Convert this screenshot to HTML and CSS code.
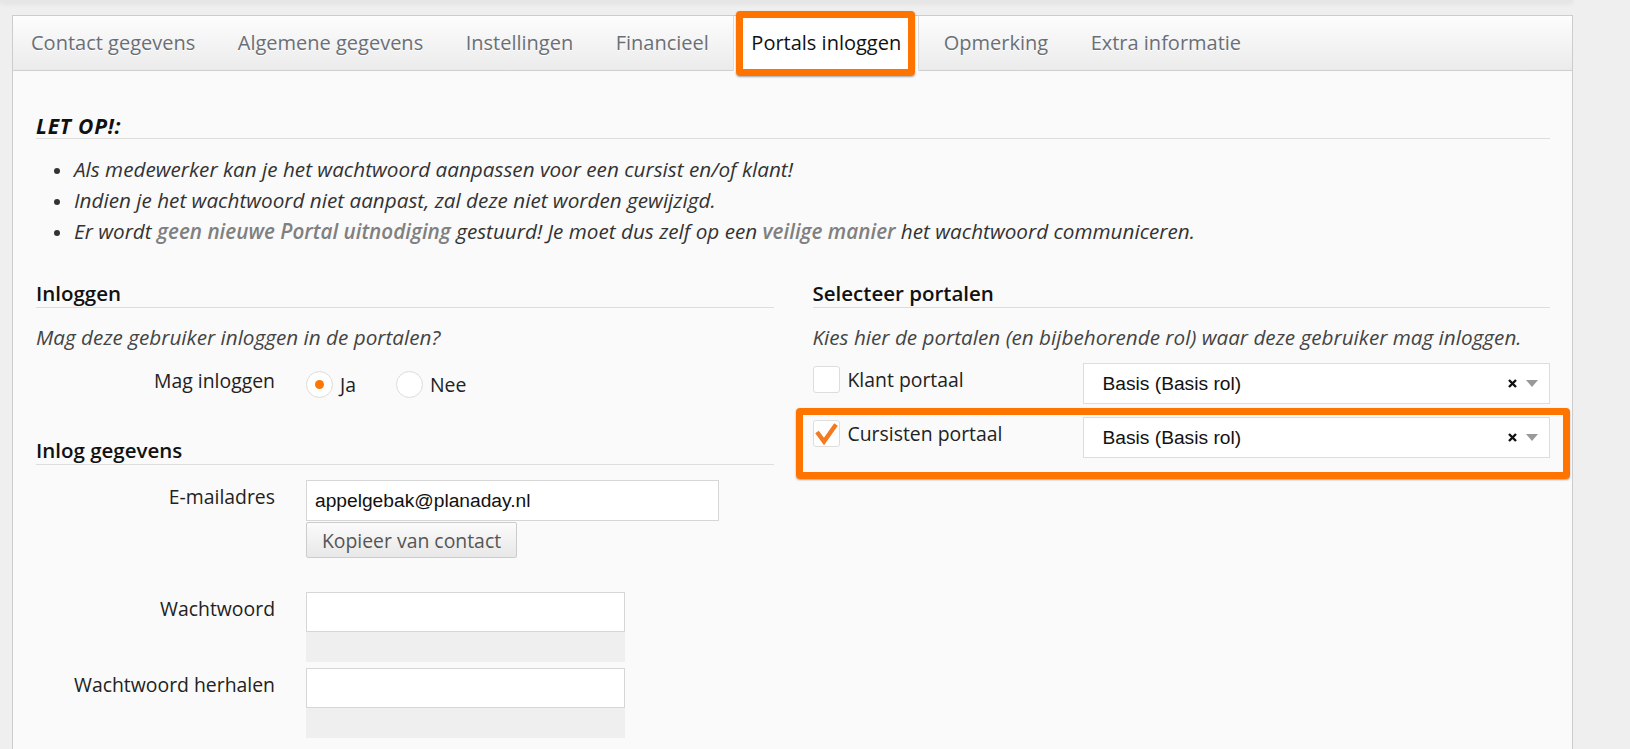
FILE: index.html
```html
<!DOCTYPE html>
<html lang="nl">
<head>
    <meta charset="UTF-8">
    <meta name="viewport" content="width=device-width, initial-scale=1.0">
    <title>Portals inloggen</title>
    <link rel="stylesheet" href="styles.css">
</head>
<body>

<div class="topbar"></div>

<div class="page">
    <div class="panel">
        <ul class="tabs">
            <li>Contact gegevens</li>
            <li>Algemene gegevens</li>
            <li>Instellingen</li>
            <li>Financieel</li>
            <li class="active">Portals inloggen<span class="mark"></span></li>
            <li>Opmerking</li>
            <li>Extra informatie</li>
        </ul>

        <div class="panel-body">
            <h4 class="notice-title">LET OP!:</h4>
            <ul class="notice">
                <li>Als medewerker kan je het wachtwoord aanpassen voor een cursist en/of klant!</li>
                <li>Indien je het wachtwoord niet aanpast, zal deze niet worden gewijzigd.</li>
                <li>Er wordt <span class="hl">geen nieuwe Portal uitnodiging</span> gestuurd! Je moet dus zelf op een <span class="hl">veilige manier</span> het wachtwoord communiceren.</li>
            </ul>

            <div class="columns">
                <div class="col">
                    <h3 class="section-title">Inloggen</h3>
                    <p class="hint">Mag deze gebruiker inloggen in de portalen?</p>

                    <div class="form-row radio-row">
                        <label class="form-label">Mag inloggen</label>
                        <div class="radios">
                            <span class="radio-option"><span class="radio checked"></span>Ja</span>
                            <span class="radio-option"><span class="radio"></span>Nee</span>
                        </div>
                    </div>

                    <h3 class="section-title second">Inlog gegevens</h3>

                    <div class="form-row email-row">
                        <label class="form-label">E-mailadres</label>
                        <div class="field">
                            <input class="text-input wide" type="text" value="appelgebak@planaday.nl">
                            <button class="btn" type="button">Kopieer van contact</button>
                        </div>
                    </div>

                    <div class="form-row password-row">
                        <label class="form-label">Wachtwoord</label>
                        <div class="field">
                            <input class="text-input" type="password">
                            <div class="strength"></div>
                        </div>
                    </div>

                    <div class="form-row repeat-row">
                        <label class="form-label">Wachtwoord herhalen</label>
                        <div class="field">
                            <input class="text-input" type="password">
                            <div class="strength"></div>
                        </div>
                    </div>
                </div>

                <div class="col">
                    <h3 class="section-title">Selecteer portalen</h3>
                    <p class="hint">Kies hier de portalen (en bijbehorende rol) waar deze gebruiker mag inloggen.</p>

                    <div class="portal-row">
                        <div class="portal-check">
                            <span class="checkbox"></span>
                            <span>Klant portaal</span>
                        </div>
                        <div class="select">
                            <span class="select-value">Basis (Basis rol)</span>
                            <svg class="select-clear" width="9" height="9" viewBox="0 0 9 9"><path d="M1 1L8 8M8 1L1 8" stroke="#111" stroke-width="2.4"/></svg>
                            <span class="select-arrow"></span>
                        </div>
                    </div>

                    <div class="portal-row flagged">
                        <div class="portal-check">
                            <span class="checkbox">
                                <svg width="25" height="25" viewBox="0 0 25 25"><path d="M3 11L10 20.5L22 3.5" fill="none" stroke="#f4791f" stroke-width="4.4" stroke-linejoin="miter"/></svg>
                            </span>
                            <span>Cursisten portaal</span>
                        </div>
                        <div class="select">
                            <span class="select-value">Basis (Basis rol)</span>
                            <svg class="select-clear" width="9" height="9" viewBox="0 0 9 9"><path d="M1 1L8 8M8 1L1 8" stroke="#111" stroke-width="2.4"/></svg>
                            <span class="select-arrow"></span>
                        </div>
                        <span class="mark"></span>
                    </div>
                </div>
            </div>
        </div>
    </div>
</div>

</body>
</html>
```

FILE: styles.css
```css
html, body {
    margin: 0;
    padding: 0;
    overflow: hidden;
}

body {
    background-color: #efefef;
    font-family: "Open Sans", sans-serif;
    font-size: 19.4px;
    color: #222;
}

.topbar {
    width: 1573px;
    height: 2px;
    background-color: #e6e6e6;
    box-shadow: 0 1px 5px rgba(0, 0, 0, 0.12);
}

.page {
    padding: 13px 57px 0 12px;
}

.panel {
    background-color: #fafafa;
    border: 1px solid #cccccc;
    height: 800px;
}

/* tab bar */
.tabs {
    list-style: none;
    margin: 0;
    padding: 0;
    display: flex;
    gap: 6.5px;
    height: 54px;
    background: linear-gradient(#fdfdfd, #ebebeb);
    border-bottom: 1px solid #cfcfcf;
}

.tabs li {
    padding: 0 18px;
    line-height: 54px;
    font-size: 20px;
    color: #6a6f76;
    text-shadow: 0 1px 0 #ffffff;
    white-space: nowrap;
}

.tabs li.active {
    position: relative;
    height: 55px;
    padding: 0 17px;
    background-color: #ffffff;
    border-left: 1px solid #dddddd;
    border-right: 1px solid #dddddd;
    color: #111;
}

.mark {
    position: absolute;
    border: 7px solid #ff7300;
    border-radius: 4px;
    box-shadow: 0 1px 2px rgba(0, 0, 0, 0.35);
    pointer-events: none;
}

.tabs li.active .mark {
    left: 2px;
    right: 3px;
    top: -5px;
    bottom: -5px;
}

.panel-body {
    padding: 0 22px 0 23px;
}

/* notice block */
.notice-title {
    margin: 43px 0 0;
    font-size: 21px;
    font-style: italic;
    font-weight: 700;
    letter-spacing: 0.8px;
    line-height: 24px;
    color: #111;
    border-bottom: 1px solid #dddddd;
}

.notice {
    list-style: none;
    margin: 15px 0 0;
    padding-left: 38px;
    line-height: 31px;
    font-size: 20.7px;
    font-style: italic;
    color: #333;
}

.notice li::before {
    content: "";
    display: inline-block;
    width: 6px;
    height: 6px;
    margin: 0 14px 0 -20px;
    border-radius: 50%;
    background-color: #333;
    vertical-align: middle;
}

.notice .hl {
    color: #808080;
    font-weight: 600;
}

.columns {
    display: grid;
    grid-template-columns: 1fr 1fr;
    column-gap: 39px;
    margin-top: 34px;
}

.section-title {
    margin: 0;
    font-size: 20.5px;
    font-weight: 600;
    line-height: 24px;
    padding-bottom: 2px;
    color: #111;
    border-bottom: 1px solid #dddddd;
}

.section-title.second {
    margin-top: 33px;
}

.hint {
    margin: 14px 0 0;
    font-size: 20.7px;
    font-style: italic;
    line-height: 30px;
    color: #444;
}

/* form rows */
.form-row {
    display: flex;
    gap: 31px;
}

.form-label {
    flex: none;
    width: 239px;
    padding-top: 2px;
    line-height: 30px;
    text-align: right;
}

.radio-row {
    margin-top: 12px;
}

.radios {
    display: flex;
    align-items: center;
    height: 41px;
}

.radio-option {
    display: flex;
    align-items: center;
    gap: 7px;
    margin-right: 40px;
}

.radio {
    width: 27px;
    height: 27px;
    box-sizing: border-box;
    border: 1px solid #dcdcdc;
    border-radius: 50%;
    background-color: #ffffff;
    display: flex;
    align-items: center;
    justify-content: center;
}

.radio.checked::after {
    content: "";
    width: 9px;
    height: 9px;
    border-radius: 50%;
    background-color: #ff7600;
}

.email-row {
    margin-top: 15px;
}

.password-row {
    margin-top: 34px;
}

.repeat-row {
    margin-top: 6px;
}

.field {
    display: flex;
    flex-direction: column;
    align-items: flex-start;
}

.text-input {
    box-sizing: border-box;
    width: 319px;
    height: 40px;
    margin: 0;
    padding: 0 8px;
    border: 1px solid #d6d6d6;
    background-color: #ffffff;
    font-family: "Liberation Sans", Arial, sans-serif;
    font-size: 19.2px;
    color: #111;
}

.text-input.wide {
    width: 413px;
    height: 41px;
}

.strength {
    width: 319px;
    height: 30px;
    background-color: #efefef;
}

.btn {
    box-sizing: border-box;
    width: 211px;
    height: 36px;
    margin-top: 1px;
    padding: 0;
    border: 1px solid #cccccc;
    border-radius: 2px;
    background: linear-gradient(#fbfbfb, #e8e8e8);
    font-family: "Open Sans", sans-serif;
    font-size: 19.4px;
    color: #555;
}

/* portal selection */
.portal-row {
    display: flex;
    margin-top: 11px;
}

.portal-row.flagged {
    position: relative;
    margin-top: 13px;
}

.portal-row.flagged .mark {
    left: -17px;
    right: -20px;
    top: -9px;
    bottom: -21px;
}

.portal-check {
    flex: none;
    width: 270px;
    display: flex;
    align-items: flex-start;
    gap: 8px;
    padding-top: 3px;
    line-height: 27px;
}

.checkbox {
    flex: none;
    width: 27px;
    height: 27px;
    box-sizing: border-box;
    border: 1px solid #dddddd;
    border-radius: 3px;
    background-color: #ffffff;
}

.checkbox svg {
    display: block;
}

.select {
    flex: 1;
    height: 41px;
    box-sizing: border-box;
    display: flex;
    align-items: center;
    padding: 0 11px 0 19px;
    border: 1px solid #dddddd;
    background-color: #ffffff;
    font-family: "Liberation Sans", Arial, sans-serif;
    font-size: 19.2px;
    color: #111;
}

.select-value {
    flex: 1;
}

.select-clear {
    margin-right: 9px;
}

.select-arrow {
    width: 0;
    height: 0;
    border-left: 6px solid transparent;
    border-right: 6px solid transparent;
    border-top: 7px solid #999999;
}
```
